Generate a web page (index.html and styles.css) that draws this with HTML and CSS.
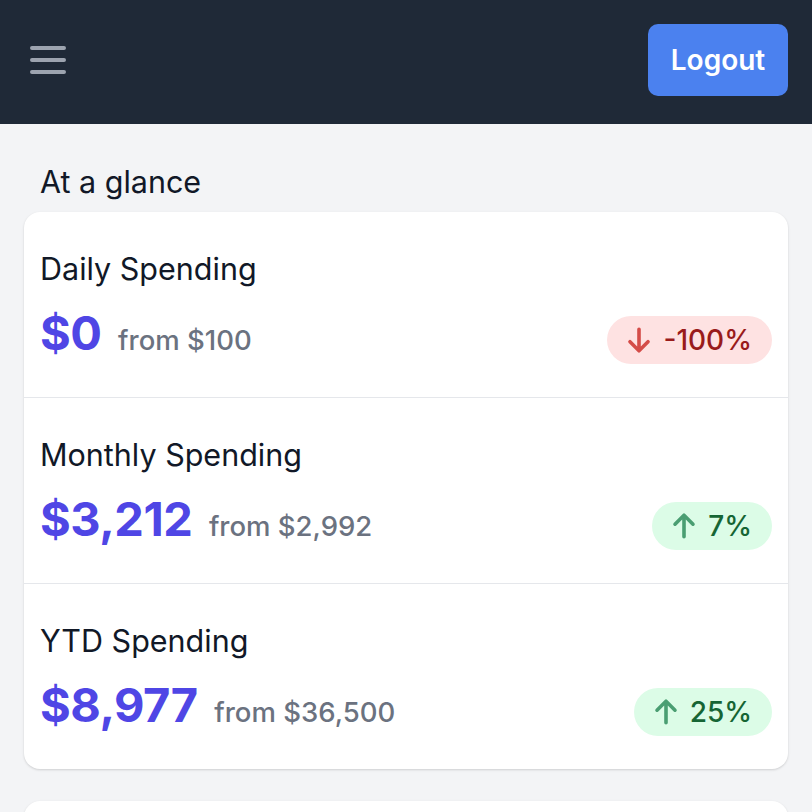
FILE: index.html
```html
<!DOCTYPE html>
<html lang="en">
<head>
<meta charset="utf-8">
<title>At a glance</title>
<link rel="stylesheet" href="styles.css">
</head>
<body>
<header class="topbar">
  <button class="menu-btn" aria-label="Menu">
    <svg viewBox="0 0 24 24" width="48" height="48" fill="none" stroke="#9ca3af" stroke-width="2" stroke-linecap="round"><path d="M4 6h16M4 12h16M4 18h16"/></svg>
  </button>
  <button class="logout">Logout</button>
</header>
<main class="content">
  <h2 class="heading">At a glance</h2>
  <dl class="stats">
    <div class="stat">
      <dt class="stat-title">Daily Spending</dt>
      <dd class="stat-row">
        <div class="stat-value">$0 <span class="stat-from">from $100</span></div>
        <span class="badge badge-down">
          <svg class="arrow" viewBox="0 0 20 20" fill="currentColor"><path fill-rule="evenodd" d="M10 3a1 1 0 011 1v9.586l3.293-3.293a1 1 0 111.414 1.414l-5 5a1 1 0 01-1.414 0l-5-5a1 1 0 111.414-1.414L9 13.586V4a1 1 0 011-1z" clip-rule="evenodd"/></svg>
          -100%
        </span>
      </dd>
    </div>
    <div class="stat">
      <dt class="stat-title">Monthly Spending</dt>
      <dd class="stat-row">
        <div class="stat-value">$3,212 <span class="stat-from">from $2,992</span></div>
        <span class="badge badge-up">
          <svg class="arrow" viewBox="0 0 20 20" fill="currentColor"><path fill-rule="evenodd" d="M10 17a1 1 0 01-1-1V6.414L5.707 9.707a1 1 0 01-1.414-1.414l5-5a1 1 0 011.414 0l5 5a1 1 0 01-1.414 1.414L11 6.414V16a1 1 0 01-1 1z" clip-rule="evenodd"/></svg>
          7%
        </span>
      </dd>
    </div>
    <div class="stat">
      <dt class="stat-title">YTD Spending</dt>
      <dd class="stat-row">
        <div class="stat-value">$8,977 <span class="stat-from">from $36,500</span></div>
        <span class="badge badge-up">
          <svg class="arrow" viewBox="0 0 20 20" fill="currentColor"><path fill-rule="evenodd" d="M10 17a1 1 0 01-1-1V6.414L5.707 9.707a1 1 0 01-1.414-1.414l5-5a1 1 0 011.414 0l5 5a1 1 0 01-1.414 1.414L11 6.414V16a1 1 0 01-1 1z" clip-rule="evenodd"/></svg>
          25%
        </span>
      </dd>
    </div>
  </dl>
  <section class="card-next"></section>
</main>
</body>
</html>
```

FILE: styles.css
```css
* { box-sizing: border-box; }
html, body { margin: 0; padding: 0; }
body {
  font-family: Inter, "Noto Sans", "Liberation Sans", sans-serif;
  background: #f3f4f6;
  color: #111827;
  overflow: hidden;
  height: 812px;
}
.topbar {
  height: 124px;
  background: #1f2937;
  display: flex;
  align-items: flex-start;
  justify-content: space-between;
  padding: 24px 24px 0;
}
.menu-btn {
  background: none;
  border: 0;
  padding: 0;
  margin-top: 12px;
  width: 48px;
  height: 48px;
  display: block;
}
.menu-btn svg { display: block; }
.logout {
  width: 140px;
  height: 72px;
  border: 0;
  border-radius: 10px;
  background: #4b81ef;
  color: #fff;
  font-family: inherit;
  font-size: 28px;
  font-weight: 600;
}
.content {
  padding: 0 24px;
}
.heading {
  margin: 0;
  padding: 36px 16px 0;
  height: 88px;
  font-size: 30.5px;
  line-height: 44px;
  font-weight: 400;
  color: #111827;
}
.stats {
  margin: 0;
  background: #fff;
  border-radius: 16px;
  box-shadow: 0 1px 3px rgba(0,0,0,0.1), 0 1px 2px rgba(0,0,0,0.06);
  overflow: hidden;
}
.stat {
  padding: 35px 16px 36px;
  height: 186px;
  border-top: 1px solid #e5e7eb;
}
.stat:first-child { border-top: 0; height: 185px; }
.stat-title {
  font-size: 30.5px;
  line-height: 44px;
  color: #111827;
}
.stat-row {
  margin: 14px 0 0;
  display: flex;
  align-items: baseline;
  justify-content: space-between;
}
.stat-value {
  font-size: 47px;
  line-height: 56px;
  font-weight: 700;
  color: #4f46e5;
  letter-spacing: -0.5px;
}
.stat-from {
  font-size: 27.5px;
  font-weight: 500;
  color: #6b7280;
  margin-left: 6px;
  letter-spacing: 0;
}
.badge {
  display: inline-flex;
  align-items: baseline;
  padding: 4px 20px;
  border-radius: 999px;
  font-size: 28px;
  line-height: 40px;
  font-weight: 500;
}
.arrow {
  width: 36px;
  height: 36px;
  margin-left: -6px;
  margin-right: 6px;
  align-self: center;
}
.badge-down { background: #fee2e2; color: #991b1b; }
.badge-down .arrow { color: #d44c48; }
.badge-up { background: #dcfce7; color: #166534; }
.badge-up .arrow { color: #4a9e72; }
.card-next {
  margin-top: 32px;
  height: 200px;
  background: #fff;
  border-radius: 16px;
  box-shadow: 0 1px 3px rgba(0,0,0,0.1), 0 1px 2px rgba(0,0,0,0.06);
}
```
